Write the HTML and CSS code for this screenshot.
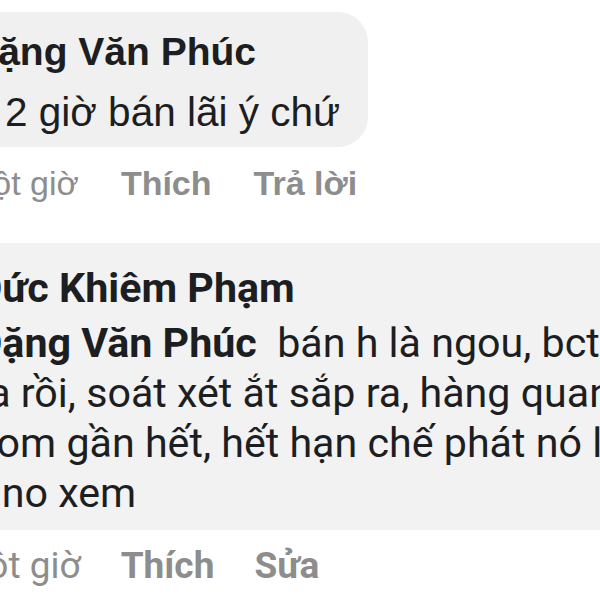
FILE: index.html
```html
<!DOCTYPE html>
<html lang="vi">
<head>
    <meta charset="UTF-8">
    <meta name="viewport" content="width=device-width, initial-scale=1.0">
    <title>Bình luận</title>
    <link rel="stylesheet" href="styles.css">
</head>
<body>

<div class="thread">
    <div class="comment">
        <div class="bubble bubble-old">
            <div class="name">Đặng Văn Phúc</div>
            <div class="text lead-in">2 giờ bán lãi ý chứ</div>
        </div>
        <div class="actions actions-old">
            <span class="time">Một giờ</span>
            <span class="link">Thích</span>
            <span class="link">Trả lời</span>
        </div>
    </div>

    <div class="comment">
        <div class="bubble bubble-new">
            <div class="name">Đức Khiêm Phạm</div>
            <div class="text">
                <span class="tag">Đặng Văn Phúc</span>&nbsp; bán h là ngou, bctc quý<br>
                ra rồi, soát xét ắt sắp ra, hàng quan tâm<br>
                com gần hết, hết hạn chế phát nó lên<br>
                Uno xem
            </div>
        </div>
        <div class="actions actions-new">
            <span class="time">Một giờ</span>
            <span class="link">Thích</span>
            <span class="link">Sửa</span>
        </div>
    </div>
</div>

</body>
</html>
```

FILE: styles.css
```css
html, body {
    margin: 0;
    padding: 0;
    background: #fff;
    overflow: hidden;
    width: 600px;
    height: 600px;
}
.thread {
    margin-left: -50px;
    padding-top: 12px;
}
.comment {
    color: #1c1e21;
}
.bubble {
    background: #f0f0f0;
    white-space: nowrap;
}
.bubble-old {
    display: inline-block;
    font-family: "Liberation Sans", Arial, sans-serif;
    font-size: 39px;
    line-height: 46px;
    padding: 17px 28px 12px 20px;
    border-radius: 30px;
}
.bubble-old .text {
    font-size: 40.5px;
    margin-top: 14px;
}
.lead-in {
    padding-left: 35px;
}
.bubble-new {
    width: 760px;
    font-family: Roboto, "Noto Sans", sans-serif;
    font-size: 41.2px;
    line-height: 50px;
    padding: 20px 20px 12px 25px;
    background: #f2f2f2;
    margin-top: 40px;
}
.bubble-new .name {
    margin-bottom: 5px;
}
.name, .tag {
    font-weight: bold;
}
.actions {
    display: flex;
    line-height: 40px;
    color: #8d8d8d;
    white-space: nowrap;
}
.actions-old {
    font-family: "Liberation Sans", Arial, sans-serif;
    font-size: 34px;
    gap: 42px;
    margin-top: 16px;
    padding-left: 14px;
}
.actions-new {
    font-family: Roboto, "Noto Sans", sans-serif;
    font-size: 37px;
    gap: 40px;
    margin-top: 16px;
    padding-left: 5px;
}
.link {
    font-weight: bold;
}
```
